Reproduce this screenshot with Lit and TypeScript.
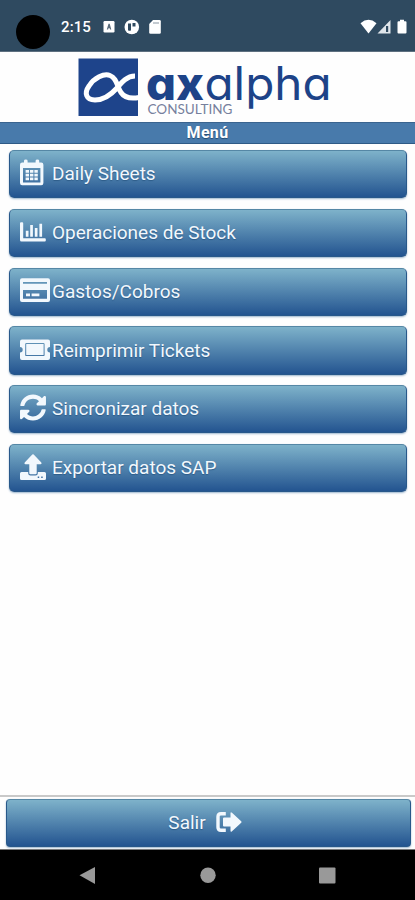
import { LitElement, html, css, svg } from "lit";
import { customElement } from "lit/decorators.js";

const icons = {
  calendar: svg`<path fill-rule="evenodd" d="M4 5.3V3.5Q4 2.2 5.8 2.2T7.600 3.5V5.3H15.600V3.5Q15.600 2.2 17.400 2.2T19.200 3.5V5.3H21.200Q23.400 5.3 23.400 7.5V25.800Q23.400 28 21.200 28H2.200Q0 28 0 25.800V7.500Q0 5.300 2.200 5.300ZM3 10.600V25.200H20.400V10.600Z"/>
    <path d="M5.600 12.800h3.400v2.700H5.600zM10 12.800h3.400v2.700H10zM14.400 12.800h3.400v2.700h-3.400zM5.600 16.500h3.400v2.700H5.600zM10 16.500h3.400v2.700H10zM14.400 16.500h3.400v2.700h-3.400zM5.600 20.200h3.400v2.700H5.600zM10 20.200h3.400v2.700H10zM14.400 20.200h3.400v2.700h-3.400z"/>`,
  chart: svg`<path d="M0 7Q0 6 1 6H2.200Q3.200 6 3.200 7V22H24.800Q25.800 22 25.800 23V24.200Q25.800 25.200 24.800 25.200H1.500Q0 25.200 0 23.700ZM5.800 14.500H8.500V20.500H5.800ZM10.200 8.700H12.900V20.500H10.200ZM14.800 11.700H17.500V20.500H14.800ZM19.400 7.500H22.100V20.500H19.400Z"/>`,
  card: svg`<path fill-rule="evenodd" d="M2 3H28Q30 3 30 5V24.700Q30 26.700 28 26.700H2Q0 26.700 0 24.700V5Q0 3 2 3ZM3 6.600V8.500H27V6.600ZM3 14.800V23.400H27V14.800Z"/><path d="M6 18.200H10V21H6ZM11.600 18.200H19.400V21H11.600Z"/>`,
  ticket: svg`<path fill-rule="evenodd" d="M2 5.300H28Q30 5.300 30 7.300V12.800A2.700 2.700 0 0 0 30 18.200V23.600Q30 25.600 28 25.600H2Q0 25.600 0 23.600V18.200A2.700 2.700 0 0 0 0 12.800V7.300Q0 5.300 2 5.300ZM6.400 8.800Q5.200 8.800 5.200 10V20.600Q5.200 21.800 6.400 21.800H23.400Q24.600 21.800 24.600 20.600V10Q24.600 8.800 23.400 8.800Z"/><rect x="6.200" y="9.800" width="17.400" height="11" rx=".5"/>`,
  sync: svg`<path transform="translate(-.4 1.9) scale(.0523)" d="M370.720 133.280C339.458 104.008 298.888 87.962 255.848 88c-77.458.068-144.328 53.178-162.791 126.850-1.344 5.363-6.122 9.150-11.651 9.150H24.103c-7.498 0-13.194-6.807-11.807-14.176C33.933 94.924 134.813 8 256 8c66.448 0 126.791 26.136 171.315 68.685L463.030 40.970C478.149 25.851 504 36.559 504 57.941V192c0 13.255-10.745 24-24 24H345.941c-21.382 0-32.090-25.851-16.971-40.971l41.750-41.749zM32 296h134.059c21.382 0 32.090 25.851 16.971 40.971l-41.750 41.750c31.262 29.273 71.835 45.319 114.876 45.280 77.418-.070 144.315-53.144 162.787-126.849 1.344-5.363 6.122-9.150 11.651-9.150h57.304c7.498 0 13.194 6.807 11.807 14.176C478.067 417.076 377.187 504 256 504c-66.448 0-126.791-26.136-171.315-68.685L48.970 471.030C33.851 486.149 8 475.441 8 454.059V320c0-13.255 10.745-24 24-24z"/>`,
  upload: svg`<path d="M12.300 3.200Q13 2.500 13.700 3.200L21.300 11.300Q22.200 13 20.600 13H16.700V21.800Q16.700 23 15.500 23H10.500Q9.300 23 9.300 21.800V13H5.400Q3.800 13 4.700 11.300Z"/><path fill-rule="evenodd" d="M1.500 20.700H8.200V22Q8.200 24.300 10.500 24.300H15.500Q17.800 24.300 17.800 22V20.700H24.500Q26 20.700 26 22.200V27.200Q26 28.700 24.500 28.700H1.500Q0 28.700 0 27.200V22.200Q0 20.700 1.500 20.700ZM17.700 25.200V26.700H19.200V25.200ZM21.200 25.200V26.700H22.700V25.200Z"/>`,
};

const entries: { label: string; icon: keyof typeof icons }[] = [
  { label: "Daily Sheets", icon: "calendar" },
  { label: "Operaciones de Stock", icon: "chart" },
  { label: "Gastos/Cobros", icon: "card" },
  { label: "Reimprimir Tickets", icon: "ticket" },
  { label: "Sincronizar datos", icon: "sync" },
  { label: "Exportar datos SAP", icon: "upload" },
];

@customElement("app-root")
export class AppRoot extends LitElement {
  static styles = css`
    :host {
      display: flex;
      flex-direction: column;
      height: 900px;
      width: 415px;
      overflow: hidden;
      background: #fefefe;
      font-family: Roboto, sans-serif;
      color: #f2f8fd;
    }
    svg { display: block; flex: none; }
    .status {
      box-sizing: border-box;
      height: 52px;
      display: flex;
      align-items: flex-start;
      background: #2f4a60;
      border-bottom: 1px solid #5e7080;
      color: #fff;
    }
    .camera {
      width: 34px;
      height: 34px;
      margin: 15px 0 0 16px;
      border-radius: 50%;
      background: #000;
    }
    .time {
      width: 41px;
      margin: 18px 0 0 11px;
      font: 500 15px/18px Roboto, sans-serif;
      letter-spacing: 0.1px;
    }
    .notes { margin-top: 18px; }
    .signals { margin: 18px 8px 0 auto; }
    .brand { height: 70px; }
    .title {
      box-sizing: border-box;
      height: 22px;
      background: #487aab;
      border-top: 1px solid #3a648f;
      border-bottom: 1px solid #2e5a86;
      text-align: center;
      font: 700 16px/20px Roboto, sans-serif;
      letter-spacing: 0.3px;
      text-shadow: 0 1px 1px #254a70;
      color: #fff;
    }
    .menu {
      flex: 1;
      display: flex;
      flex-direction: column;
      gap: 10.5px;
      padding: 6px 8px 0 9px;
    }
    .button {
      box-sizing: border-box;
      height: 48.3px;
      width: 100%;
      display: flex;
      align-items: center;
      flex: none;
      margin: 0;
      padding: 0 0 0 10px;
      border: 1px solid #28588a;
      border-top-color: #5587a5;
      border-radius: 5px;
      background: linear-gradient(#7eb2ca, #235490);
      box-shadow: 0 1px 2px #9bb5cd;
      color: inherit;
      font: 400 19px/24px Roboto, sans-serif;
      text-shadow: 0 1px 1px #2d5c88;
      text-align: left;
    }
    .icon { width: 32px; }
    .icon svg, .exit { fill: #f2f8fd; }
    .footer {
      box-sizing: border-box;
      height: 55px;
      padding: 2px 4px 0 6px;
      border-top: 2px solid #c9c9c9;
      border-bottom: 1px solid #777;
    }
    .leave {
      justify-content: center;
      gap: 10px;
      padding: 0 7px 0 0;
      border-radius: 4px;
    }
    .exit { margin-bottom: 3px; }
    .nav { height: 50px; background: #000; }
    .wordmark { font-family: Inter, sans-serif; font-feature-settings: "cv11"; fill: #1d4388; }
    .bold { font-weight: 800; }
    .sub { font: 400 14px Lato, sans-serif; fill: #76809d; }
  `;

  render() {
    return html`
      <div class="status">
        <div class="camera"></div>
        <div class="time">2:15</div>
        <svg class="notes" width="62" height="18" viewBox="0 0 62 18">
          <rect x="1.500" y="3" width="11" height="11.500" rx="1.200" fill="#fff" />
          <path d="M4.800 11.500 6.500 5.700h1.200l1.600 5.800H8l-.3-1.300H6.400l-.3 1.300z" fill="#586b7c" />
          <circle cx="29.800" cy="9" r="7.300" fill="#fff" />
          <path d="M26 5.500h3v6.800q-1.200 1-3 0zM30.500 5h3v3.500h-3z" fill="#2f4a60" />
          <path d="M51 2H57.500Q58.800 2 58.800 3.300V14.500Q58.800 15.800 57.500 15.800H48.500Q47.200 15.800 47.200 14.500V6Z" fill="#fff" />
          <path d="M51.500 4h1v2h-1zM53.500 4h1v2h-1zM55.500 4h1v2h-1z" fill="#8996a2" />
        </svg>
        <svg class="signals" width="48" height="18" viewBox="0 0 48 18">
          <path d="M1.500 5.200Q9.500 -1.500 17.500 5.200L9.500 15.500Z" fill="#fff" />
          <path d="M31.500 2V15.500H18.500Z" fill="#dfe5ea" />
          <path d="M27 8h2.200v6H27z" fill="#2f4a60" />
          <path d="M41 1.800h4V3.200h1.500q1 0 1 1V14.500q0 1-1 1H39.500q-1 0-1-1V4.200q0-1 1-1H41Z" fill="#fff" />
        </svg>
      </div>
      <svg class="brand" width="415" height="70" viewBox="0 52 415 70">
        <rect x="78.500" y="58.500" width="59.500" height="57.500" fill="#1e448b" />
        <path d="M135 76C127 76 122 82 117 88C109 97 102 100 95 100C86 100 84 93 89 86C94 78 104 73 110 75.500C117 78 117 87 121 92.500C125 98.500 131 99 139 97.500" fill="none" stroke="#fff" stroke-width="5" />
        <text class="wordmark" y="99.500" font-size="46"><tspan class="bold" x="146" textLength="58" lengthAdjust="spacingAndGlyphs">ax</tspan><tspan x="204.500" textLength="127" lengthAdjust="spacingAndGlyphs">alpha</tspan></text>
        <text class="sub" x="147.500" y="114.400" textLength="85" lengthAdjust="spacingAndGlyphs">CONSULTING</text>
      </svg>
      <div class="title">Menú</div>
      <div class="menu">
        ${entries.map(
          (e) => html`<button class="button">
            <span class="icon"><svg width="30" height="32" viewBox="0 .7 30 32">${icons[e.icon]}</svg></span>
            ${e.label}
          </button>`
        )}
      </div>
      <div class="footer">
        <button class="button leave">
          Salir
          <svg class="exit" width="26" height="22" viewBox="0 0 26 22">
            <path d="M9.800 2.800H5Q2 2.800 2 5.800V16.200Q2 19.200 5 19.200H9.800" fill="none" stroke="#f2f8fd" stroke-width="3.400" />
            <path d="M7 7.500Q7 6.500 8 6.500H14.500V2.500Q14.500 .5 16 1.800L25.200 10.300Q26 11 25.200 11.800L16 20.200Q14.500 21.500 14.500 19.500V15.500H8Q7 15.500 7 14.500Z" />
          </svg>
        </button>
      </div>
      <svg class="nav" width="415" height="50" viewBox="0 850 415 50" fill="#999">
        <path d="M79.500 875.300 95 867V884Z" />
        <circle cx="208" cy="875.300" r="7.700" />
        <rect x="319" y="867.500" width="16.500" height="16" rx="1" />
      </svg>
    `;
  }
}
